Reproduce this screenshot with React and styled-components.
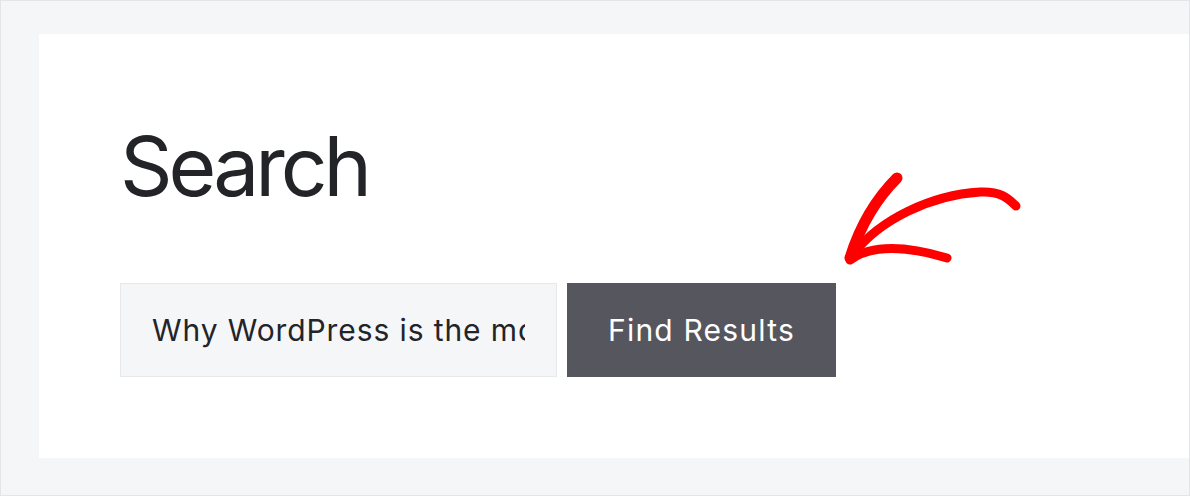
import React from 'react';
import styled, { createGlobalStyle } from 'styled-components';

const GlobalStyle = createGlobalStyle`
	* { box-sizing: border-box; }
	body {
		margin: 0;
		background: #ffffff;
		font-family: Inter, "Liberation Sans", sans-serif;
	}
`;

const Frame = styled.div`
	width: 1190px;
	height: 496px;
	border: 1px solid #e3e5e8;
	background-color: #f5f6f8;
	padding: 33px 0 0 38px;
`;

const Panel = styled.div`
	position: relative;
	height: 424px;
	background-color: #ffffff;
	padding: 92px 0 0 81px;
`;

const Title = styled.h1`
	margin: 0;
	font-family: Inter, "Liberation Sans", sans-serif;
	font-weight: 400;
	font-size: 82px;
	line-height: 82px;
	letter-spacing: -4px;
	color: #232428;
`;

const SearchRow = styled.form`
	display: flex;
	gap: 10px;
	margin-top: 75px;
`;

const Field = styled.input`
	width: 437px;
	height: 94px;
	padding: 0 31px;
	border: 1px solid #e6e8eb;
	background-color: #f5f6f8;
	font-family: Inter, "Liberation Sans", sans-serif;
	font-size: 30px;
	letter-spacing: 0.9px;
	color: #232428;
	outline: none;
`;

const Button = styled.button`
	width: 269px;
	height: 94px;
	border: none;
	background-color: #56565e;
	color: #ffffff;
	font-family: Inter, "Liberation Sans", sans-serif;
	font-size: 30px;
	letter-spacing: 1.2px;
	cursor: pointer;
`;

const Arrow = styled.svg`
	position: absolute;
	left: 801px;
	top: 136px;
	overflow: visible;
`;

const Scribble = () =>
	<Arrow width="190" height="100" viewBox="0 0 190 100" fill="none">
		<g stroke="#ff0000" strokeWidth="9" strokeLinecap="round" strokeLinejoin="round">
			<path d="M14 83 C40 50 90 25 140 22 C160 21 168 28 176 36" />
			<path d="M10 88 Q25 40 57 8" strokeWidth="11" />
			<path d="M10 90 Q40 68 107 88" />
		</g>
	</Arrow>

const App = () => {
	return (
		<Frame>
			<GlobalStyle />
			<Panel>
				<Title>Search</Title>
				<SearchRow onSubmit={e => e.preventDefault()}>
					<Field readOnly value="Why WordPress is the most popular CMS" />
					<Button type="submit">Find Results</Button>
				</SearchRow>
				<Scribble />
			</Panel>
		</Frame>
	)
}

export default App
